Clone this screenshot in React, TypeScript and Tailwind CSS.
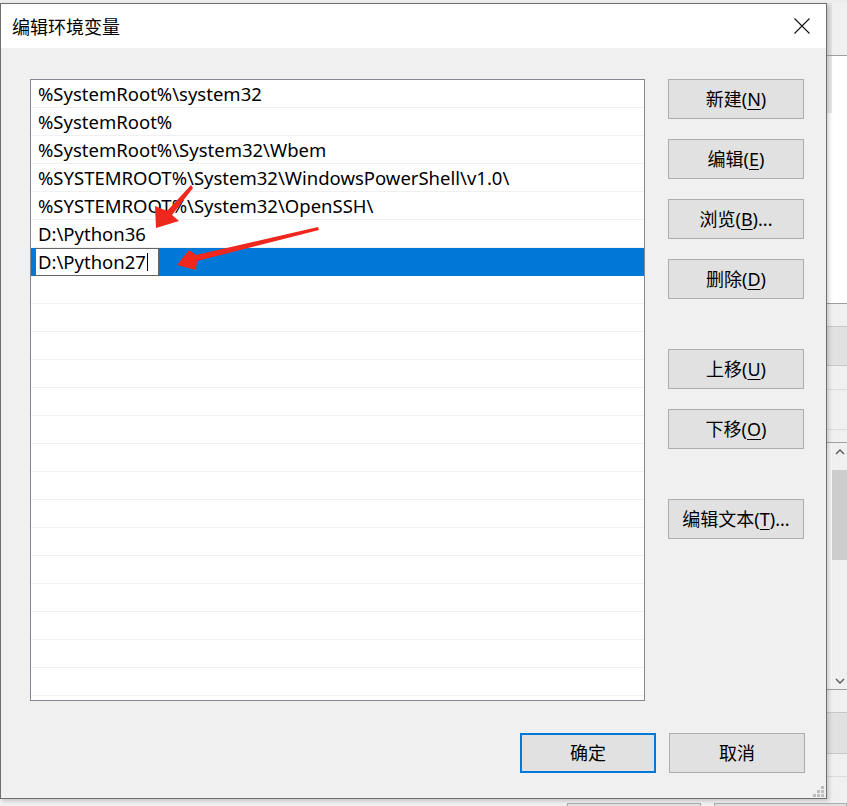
import React from "react";

const entries = [
  "%SystemRoot%\\system32",
  "%SystemRoot%",
  "%SystemRoot%\\System32\\Wbem",
  "%SYSTEMROOT%\\System32\\WindowsPowerShell\\v1.0\\",
  "%SYSTEMROOT%\\System32\\OpenSSH\\",
  "D:\\Python36",
];

const sideButtons = [
  { label: "新建", key: "N", tail: "", gap: "" },
  { label: "编辑", key: "E", tail: "", gap: "mt-[20px]" },
  { label: "浏览", key: "B", tail: "...", gap: "mt-[20px]" },
  { label: "删除", key: "D", tail: "", gap: "mt-[20px]" },
  { label: "上移", key: "U", tail: "", gap: "mt-[50px]" },
  { label: "下移", key: "O", tail: "", gap: "mt-[20px]" },
  { label: "编辑文本", key: "T", tail: "...", gap: "mt-[50px]" },
];

function WinButton({
  children,
  primary,
  className = "",
}: {
  children: React.ReactNode;
  primary?: boolean;
  className?: string;
}) {
  return (
    <div
      className={
        "w-[136px] h-[40px] shrink-0 flex items-center justify-center bg-[#e1e1e1] text-[18px] text-black " +
        (primary ? "border-2 border-[#0078d7] " : "border border-[#adadad] ") +
        className
      }
    >
      {children}
    </div>
  );
}

function PathList() {
  const rows = Array.from({ length: 23 }, (_, i) => i);
  return (
    <div className="w-[615px] h-[622px] border border-[#828790] bg-white overflow-hidden">
      {rows.map((i) => {
        if (i === 6) {
          return (
            <div key={i} className="h-[28px] bg-[#0078d7] pl-[4px] flex">
              <div className="w-[124px] h-[28px] border border-[#646464] bg-white pl-[2px] flex items-center text-[18.5px] text-black">
                <span>D:\Python27</span>
                <span className="ml-[1px] w-[1px] h-[18px] bg-black" />
              </div>
            </div>
          );
        }
        return (
          <div
            key={i}
            className="h-[28px] border-b border-[#f0f0f0] pl-[7px] leading-[27px] text-[18.5px] text-black whitespace-nowrap"
          >
            {entries[i] ?? ""}
          </div>
        );
      })}
    </div>
  );
}

function BehindStrip() {
  return (
    <div className="w-[20px] h-[796px] flex flex-col bg-[#f0f0f0]">
      <div className="h-[52px] shrink-0 flex">
        <div className="w-[5px] bg-[#e4e4e4]" />
      </div>
      <div className="h-[1px] shrink-0 bg-[#a0a0a0]" />
      <div className="h-[247px] shrink-0 bg-white flex">
        <div className="w-[5px] h-[57px] bg-[#e8e8e8]" />
      </div>
      <div className="h-[1px] shrink-0 bg-[#a0a0a0]" />
      <div className="h-[22px] shrink-0" />
      <div className="h-[40px] shrink-0 bg-[#e1e1e1] border-y border-[#c8c8c8]" />
      <div className="h-[23px] shrink-0" />
      <div className="h-[1px] shrink-0 bg-[#dcdcdc]" />
      <div className="h-[39px] shrink-0" />
      <div className="h-[1px] shrink-0 bg-[#dcdcdc]" />
      <div className="h-[12px] shrink-0" />
      <div className="h-[247px] shrink-0 flex border-t border-[#a0a0a0]">
        <div className="w-[5px] bg-[#f7f7f7]" />
        <div className="flex-1 flex flex-col bg-[#f0f0f0]">
          <div className="h-[17px] flex items-center justify-center">
            <svg width="10" height="6" viewBox="0 0 10 6">
              <path d="M1 5 L5 1 L9 5" stroke="#606060" strokeWidth="1.5" fill="none" />
            </svg>
          </div>
          <div className="h-[10px]" />
          <div className="h-[90px] bg-[#cdcdcd]" />
          <div className="flex-1" />
          <div className="h-[17px] flex items-center justify-center">
            <svg width="10" height="6" viewBox="0 0 10 6">
              <path d="M1 1 L5 5 L9 1" stroke="#606060" strokeWidth="1.5" fill="none" />
            </svg>
          </div>
        </div>
      </div>
      <div className="h-[1px] shrink-0 bg-[#a0a0a0]" />
      <div className="h-[22px] shrink-0" />
      <div className="h-[42px] shrink-0 bg-[#e1e1e1] border-y border-[#c8c8c8]" />
      <div className="h-[22px] shrink-0" />
      <div className="h-[1px] shrink-0 bg-[#dcdcdc]" />
      <div className="flex-1" />
    </div>
  );
}

export default function App() {
  return (
    <div className="relative w-[847px] h-[806px] overflow-hidden bg-[#f0f0f0] flex flex-col font-['Noto_Sans','Noto_Sans_CJK_SC',sans-serif]">
      <div className="h-[3px] shrink-0 bg-[#ececec]" />
      <div className="flex shrink-0">
        <div className="w-[827px] h-[796px] border border-[#6f6f6f] bg-[#f0f0f0] flex flex-col shadow-[2px_2px_4px_rgba(0,0,0,0.18)] z-10">
          <div className="h-[44px] shrink-0 bg-white flex items-center justify-between pl-[11px] pr-[16px]">
            <span className="text-[18px] text-black font-['Noto_Sans_CJK_SC',sans-serif]">
              编辑环境变量
            </span>
            <svg width="16" height="16" viewBox="0 0 16 16">
              <path d="M0.5 0.5 L15.5 15.5 M15.5 0.5 L0.5 15.5" stroke="#111" strokeWidth="1.1" />
            </svg>
          </div>
          <div className="flex-1 flex flex-col">
            <div className="flex pl-[29px] pt-[31px] gap-[23px]">
              <PathList />
              <div className="flex flex-col">
                {sideButtons.map((b) => (
                  <WinButton key={b.key} className={b.gap}>
                    <span>{b.label}(</span>
                    <span className="underline underline-offset-[3px] decoration-1">{b.key}</span>
                    <span>){b.tail}</span>
                  </WinButton>
                ))}
              </div>
            </div>
            <div className="flex justify-end gap-[13px] pr-[21px] mt-[32px]">
              <WinButton primary>确定</WinButton>
              <WinButton>取消</WinButton>
            </div>
            <div className="flex-1 flex justify-end items-end pr-[2px] pb-[1px]">
              <svg width="12" height="12" viewBox="0 0 12 12">
                <rect x="9" y="1" width="3" height="3" fill="#bdbdbd" />
                <rect x="5" y="5" width="3" height="3" fill="#bdbdbd" />
                <rect x="9" y="5" width="3" height="3" fill="#bdbdbd" />
                <rect x="1" y="9" width="3" height="3" fill="#bdbdbd" />
                <rect x="5" y="9" width="3" height="3" fill="#bdbdbd" />
                <rect x="9" y="9" width="3" height="3" fill="#bdbdbd" />
              </svg>
            </div>
          </div>
        </div>
        <BehindStrip />
      </div>
      <div className="flex-1 flex items-end pl-[567px] gap-[13px]">
        <div className="w-[136px] h-[3px] bg-[#e1e1e1] border-t border-x border-[#adadad]" />
        <div className="w-[136px] h-[3px] bg-[#e1e1e1] border-t border-x border-[#adadad]" />
      </div>

      {/* red annotation arrows */}
      <svg
        className="absolute inset-0 pointer-events-none z-20"
        width="847"
        height="806"
        viewBox="0 0 847 806"
      >
        <polygon
          points="191,185 193,188 172,215 179,221 156,228 155,206 167,211"
          fill="#f0271c"
        />
        <polygon
          points="318,227 319,230 197,261 196,270 177,265 189,250 196,255"
          fill="#f0271c"
        />
      </svg>
    </div>
  );
}
